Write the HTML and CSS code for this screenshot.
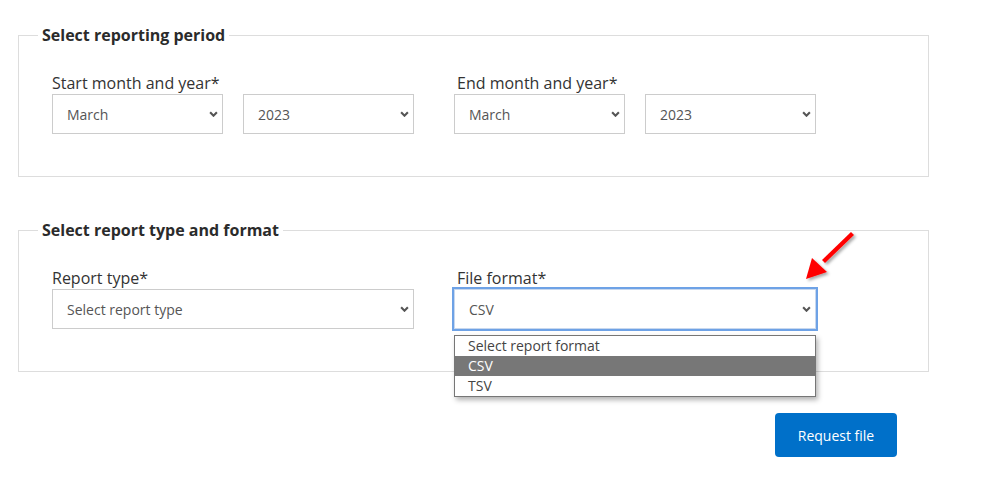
FILE: index.html
```html
<!DOCTYPE html>
<html lang="en">
<head>
<meta charset="utf-8">
<link rel="stylesheet" href="styles.css">
</head>
<body>
<div class="page">
  <fieldset class="box first">
    <legend>Select reporting period</legend>
    <div class="row">
      <div class="group">
        <label class="lbl">Start month and year*</label>
        <div class="pair">
          <div class="sel half"><select><option>March</option></select><svg class="chev" viewBox="0 0 8 5"><path d="M1 1 L4 4 L7 1" fill="none" stroke="#555" stroke-width="1.9"/></svg></div>
          <div class="sel half"><select><option>2023</option></select><svg class="chev" viewBox="0 0 8 5"><path d="M1 1 L4 4 L7 1" fill="none" stroke="#555" stroke-width="1.9"/></svg></div>
        </div>
      </div>
      <div class="group">
        <label class="lbl ind">End month and year*</label>
        <div class="pair">
          <div class="sel half"><select><option>March</option></select><svg class="chev" viewBox="0 0 8 5"><path d="M1 1 L4 4 L7 1" fill="none" stroke="#555" stroke-width="1.9"/></svg></div>
          <div class="sel half"><select><option>2023</option></select><svg class="chev" viewBox="0 0 8 5"><path d="M1 1 L4 4 L7 1" fill="none" stroke="#555" stroke-width="1.9"/></svg></div>
        </div>
      </div>
    </div>
  </fieldset>

  <fieldset class="box second">
    <legend>Select report type and format</legend>
    <div class="row">
      <div class="group">
        <label class="lbl">Report type*</label>
        <div class="sel"><select><option>Select report type</option></select><svg class="chev" viewBox="0 0 8 5"><path d="M1 1 L4 4 L7 1" fill="none" stroke="#555" stroke-width="1.9"/></svg></div>
      </div>
      <div class="group">
        <label class="lbl ind">File format*</label>
        <div class="sel focused"><select><option>CSV</option></select><svg class="chev" viewBox="0 0 8 5"><path d="M1 1 L4 4 L7 1" fill="none" stroke="#555" stroke-width="1.9"/></svg>
          <ul class="dropdown">
            <li>Select report format</li>
            <li class="active">CSV</li>
            <li>TSV</li>
          </ul>
        </div>
      </div>
    </div>
  </fieldset>

  <div class="actions">
    <button class="btn">Request file</button>
  </div>

  <svg class="arrow" width="60" height="60" viewBox="0 0 60 60">
    <defs>
      <filter id="sh" x="-30%" y="-30%" width="160%" height="160%">
        <feDropShadow dx="2" dy="2" stdDeviation="1.5" flood-color="#000" flood-opacity="0.35"/>
      </filter>
    </defs>
    <g filter="url(#sh)" fill="#ff0000">
      <path d="M52 6 L55 9 L26 37 L23 34 Z"/>
      <path d="M7 53 L13 32 L28 46 Z"/>
    </g>
  </svg>
</div>
</body>
</html>
```

FILE: styles.css
```css
* { box-sizing: border-box; }
html, body { margin: 0; padding: 0; background: #fff; }
body {
  font-family: "Open Sans", "Noto Sans", sans-serif;
  color: #333;
  width: 983px;
  height: 486px;
  overflow: hidden;
}
.page {
  position: relative;
  padding-left: 18px;
  padding-top: 25px;
  width: 929px;
}
.box {
  border: 1px solid #ddd;
  margin: 0;
  padding: 27px 33px 42px 33px;
  min-width: 0;
}
.box.second { margin-top: 43px; }
legend {
  font-weight: 700;
  font-size: 16px;
  line-height: 20px;
  color: #2b2b2b;
  padding: 0 4px;
  margin-left: -14px;
}
.row {
  display: flex;
  gap: 40px;
}
.group {
  width: 362px;
  display: flex;
  flex-direction: column;
}
.lbl {
  font-size: 16px;
  line-height: 22px;
  color: #333;
}
.lbl.ind { padding-left: 3px; }
.pair {
  display: flex;
  gap: 20px;
}
.sel {
  position: relative;
  height: 40px;
  width: 362px;
}
.sel.half { width: 171px; }
.sel select {
  -webkit-appearance: none;
  appearance: none;
  width: 100%;
  height: 100%;
  border: 1px solid #ccc;
  border-radius: 0;
  background: #fff;
  font-family: "Open Sans", "Noto Sans", sans-serif;
  font-size: 14px;
  color: #555;
  padding: 0 0 0 14px;
  margin: 0;
  outline: none;
}
.sel.focused select {
  border: 1px solid #c8d8ee;
  box-shadow: 0 0 0 2px #6ea2e6;
}
.chev {
  position: absolute;
  right: 5px;
  top: 17px;
  width: 9px;
  height: 6px;
}
.dropdown {
  position: absolute;
  left: 0;
  top: 46px;
  width: 362px;
  margin: 0;
  padding: 0;
  list-style: none;
  background: #fff;
  border: 1px solid #767676;
  box-shadow: 2px 3px 5px rgba(0,0,0,0.3);
  z-index: 5;
}
.dropdown li {
  height: 20px;
  line-height: 20px;
  font-size: 14px;
  color: #444;
  padding-left: 13px;
}
.dropdown li.active {
  background: #777;
  color: #fff;
}
.actions {
  display: flex;
  justify-content: flex-end;
  padding-right: 32px;
  margin-top: 41px;
}
.btn {
  width: 122px;
  height: 44px;
  background: #0070c9;
  color: #fff;
  border: none;
  border-radius: 4px;
  font-family: "Open Sans", "Noto Sans", sans-serif;
  font-size: 14px;
  font-weight: 500;
}
.arrow {
  position: absolute;
  left: 799px;
  top: 226px;
}
```
